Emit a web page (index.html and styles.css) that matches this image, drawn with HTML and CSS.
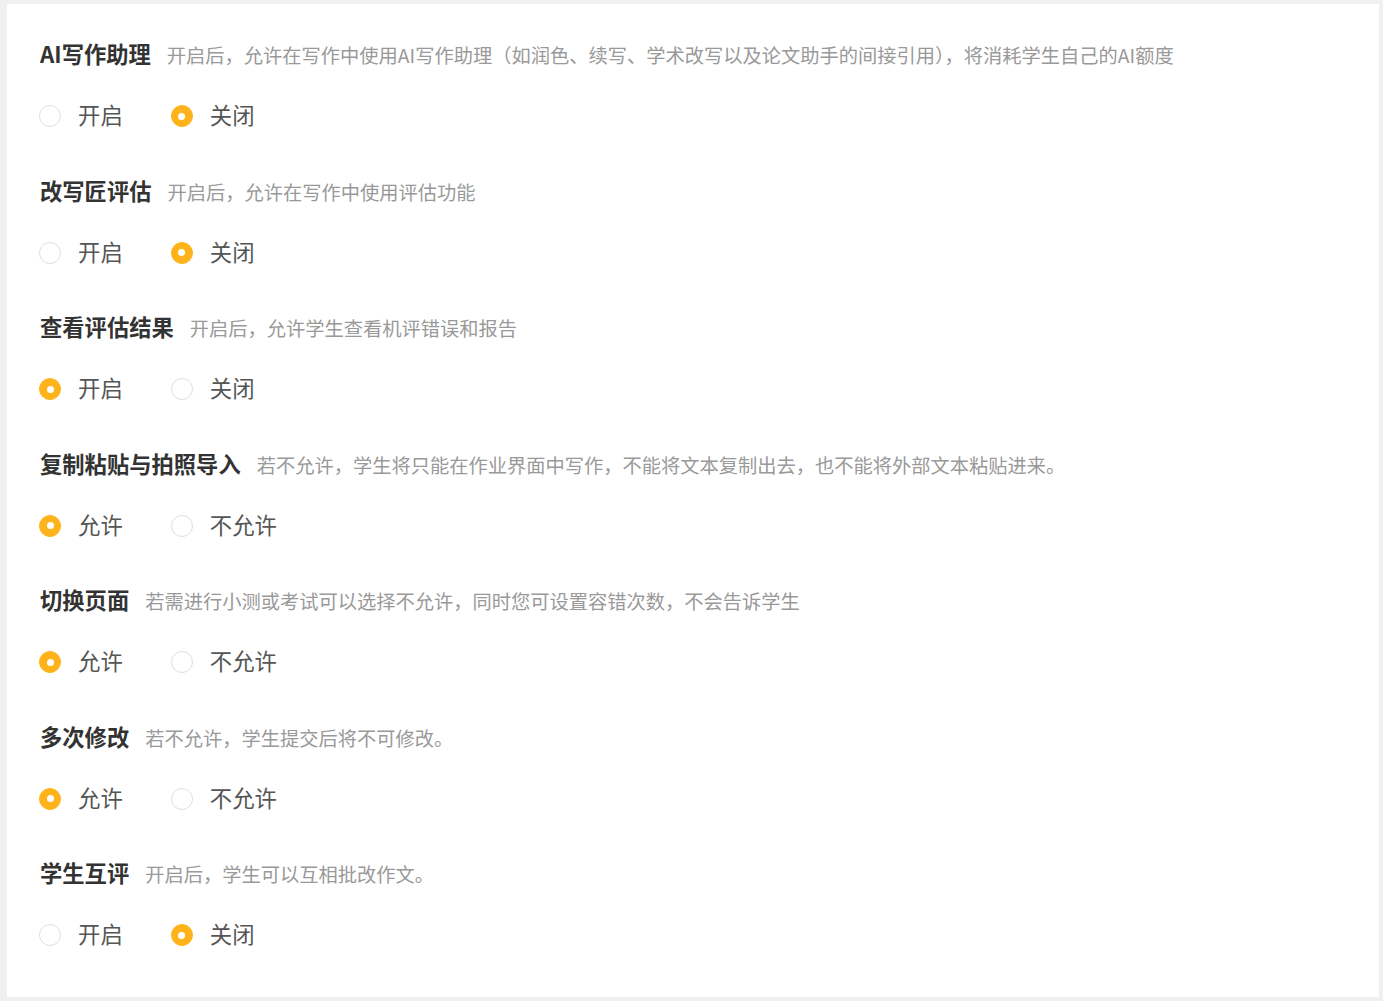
FILE: index.html
```html
<!DOCTYPE html>
<html lang="zh-CN">
<head>
<meta charset="utf-8">
<title>设置</title>
<link rel="stylesheet" href="styles.css">
</head>
<body>
<div class="page">
  <div class="card">
    <section class="setting">
      <div class="head"><span class="title">AI写作助理</span><span class="desc">开启后，允许在写作中使用AI写作助理（如润色、续写、学术改写以及论文助手的间接引用），将消耗学生自己的AI额度</span></div>
      <div class="options">
        <label class="opt"><span class="radio"></span><span class="label">开启</span></label>
        <label class="opt"><span class="radio on"></span><span class="label">关闭</span></label>
      </div>
    </section>
    <section class="setting">
      <div class="head"><span class="title">改写匠评估</span><span class="desc">开启后，允许在写作中使用评估功能</span></div>
      <div class="options">
        <label class="opt"><span class="radio"></span><span class="label">开启</span></label>
        <label class="opt"><span class="radio on"></span><span class="label">关闭</span></label>
      </div>
    </section>
    <section class="setting">
      <div class="head"><span class="title">查看评估结果</span><span class="desc">开启后，允许学生查看机评错误和报告</span></div>
      <div class="options">
        <label class="opt"><span class="radio on"></span><span class="label">开启</span></label>
        <label class="opt"><span class="radio"></span><span class="label">关闭</span></label>
      </div>
    </section>
    <section class="setting">
      <div class="head"><span class="title">复制粘贴与拍照导入</span><span class="desc">若不允许，学生将只能在作业界面中写作，不能将文本复制出去，也不能将外部文本粘贴进来。</span></div>
      <div class="options">
        <label class="opt"><span class="radio on"></span><span class="label">允许</span></label>
        <label class="opt"><span class="radio"></span><span class="label">不允许</span></label>
      </div>
    </section>
    <section class="setting">
      <div class="head"><span class="title">切换页面</span><span class="desc">若需进行小测或考试可以选择不允许，同时您可设置容错次数，不会告诉学生</span></div>
      <div class="options">
        <label class="opt"><span class="radio on"></span><span class="label">允许</span></label>
        <label class="opt"><span class="radio"></span><span class="label">不允许</span></label>
      </div>
    </section>
    <section class="setting">
      <div class="head"><span class="title">多次修改</span><span class="desc">若不允许，学生提交后将不可修改。</span></div>
      <div class="options">
        <label class="opt"><span class="radio on"></span><span class="label">允许</span></label>
        <label class="opt"><span class="radio"></span><span class="label">不允许</span></label>
      </div>
    </section>
    <section class="setting">
      <div class="head"><span class="title">学生互评</span><span class="desc">开启后，学生可以互相批改作文。</span></div>
      <div class="options">
        <label class="opt"><span class="radio"></span><span class="label">开启</span></label>
        <label class="opt"><span class="radio on"></span><span class="label">关闭</span></label>
      </div>
    </section>
  </div>
</div>
</body>
</html>
```

FILE: styles.css
```css
html, body {
  margin: 0;
  padding: 0;
  background: #f0f0f0;
}
body {
  font-family: "Noto Sans CJK SC", "Noto Sans", sans-serif;
}
.page {
  padding: 4px 4px 4px 7px;
  height: 1001px;
  box-sizing: border-box;
}
.card {
  background: #ffffff;
  height: 993px;
  box-sizing: border-box;
  padding: 34px 32px 0 32px;
}
.setting {
  margin-bottom: 45.5px;
}
.head {
  display: flex;
  align-items: baseline;
  height: 30px;
  line-height: 30px;
  white-space: nowrap;
}
.title {
  font-size: 22.3px;
  font-weight: bold;
  color: #333333;
  margin-right: 16px;
  margin-left: 1px;
}
.desc {
  font-size: 19.25px;
  color: #999999;
}
.options {
  display: flex;
  align-items: center;
  height: 30px;
  margin-top: 31px;
}
.opt {
  display: flex;
  align-items: center;
  margin-right: 48px;
}
.opt:last-child {
  margin-right: 0;
}
.radio {
  width: 22px;
  height: 22px;
  margin-top: 4px;
  box-sizing: border-box;
  border-radius: 50%;
  border: 1px solid #dcdfe6;
  background: #ffffff;
  position: relative;
  flex: none;
}
.radio.on {
  background: #ffb31a;
  border-color: #ffb31a;
}
.radio.on::after {
  content: "";
  position: absolute;
  left: 50%;
  top: 50%;
  width: 7px;
  height: 7px;
  margin: -3.5px 0 0 -3.5px;
  border-radius: 50%;
  background: #ffffff;
}
.label {
  margin-left: 17px;
  font-size: 22.4px;
  line-height: 30px;
  color: #555555;
}
```
